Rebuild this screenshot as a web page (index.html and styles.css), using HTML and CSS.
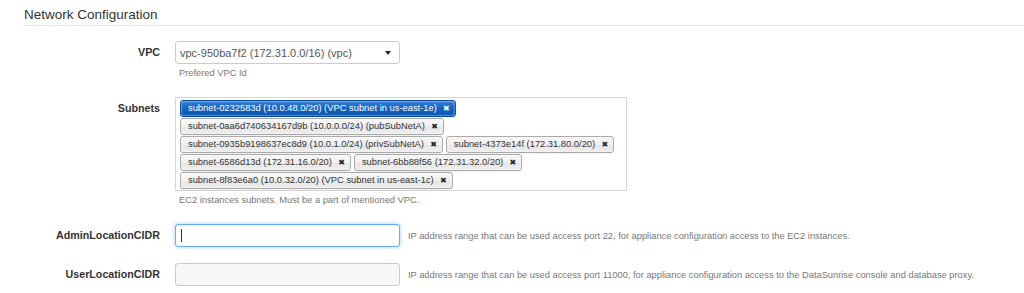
FILE: index.html
```html
<!DOCTYPE html>
<html lang="en">
<head>
  <meta charset="UTF-8" />
  <title>Network Configuration</title>
  <link rel="stylesheet" href="styles.css">
</head>
<body>
  <div class="page">
    <h3 class="section-title">Network Configuration</h3>
    <div class="form">
      <!-- VPC -->
      <div class="form-row row-vpc">
        <label class="row-label">VPC</label>
        <div class="row-field">
          <div class="select-box">
            <span class="select-value">vpc-950ba7f2 (172.31.0.0/16) (vpc)</span>
            <span class="select-arrow"></span>
          </div>
          <p class="help">Prefered VPC Id</p>
        </div>
      </div>
      <!-- Subnets -->
      <div class="form-row row-subnets">
        <label class="row-label">Subnets</label>
        <div class="row-field">
          <ul class="tag-box">
            <li class="tag active">subnet-0232583d (10.0.48.0/20) (VPC subnet in us-east-1e)<span class="tag-close">&#10006;</span></li>
            <li class="tag">subnet-0aa6d740634167d9b (10.0.0.0/24) (pubSubNetA)<span class="tag-close">&#10006;</span></li>
            <li class="tag">subnet-0935b9198637ec8d9 (10.0.1.0/24) (privSubNetA)<span class="tag-close">&#10006;</span></li>
            <li class="tag">subnet-4373e14f (172.31.80.0/20)<span class="tag-close">&#10006;</span></li>
            <li class="tag">subnet-6586d13d (172.31.16.0/20)<span class="tag-close">&#10006;</span></li>
            <li class="tag">subnet-6bb88f56 (172.31.32.0/20)<span class="tag-close">&#10006;</span></li>
            <li class="tag">subnet-8f83e6a0 (10.0.32.0/20) (VPC subnet in us-east-1c)<span class="tag-close">&#10006;</span></li>
          </ul>
          <p class="help">EC2 instances subnets. Must be a part of mentioned VPC.</p>
        </div>
      </div>
      <!-- Admin CIDR -->
      <div class="form-row row-admin">
        <label class="row-label">AdminLocationCIDR</label>
        <div class="row-field inline">
          <span class="input-wrap focused"><input class="text-input" type="text"></span>
          <p class="help side">IP address range that can be used access port 22, for appliance configuration access to the EC2 instances.</p>
        </div>
      </div>
      <!-- User CIDR -->
      <div class="form-row row-user">
        <label class="row-label">UserLocationCIDR</label>
        <div class="row-field inline">
          <span class="input-wrap"><input class="text-input muted" type="text"></span>
          <p class="help side">IP address range that can be used access port 11000, for appliance configuration access to the DataSunrise console and database proxy.</p>
        </div>
      </div>
    </div>
  </div>
</body>
</html>
```

FILE: styles.css
```css
html, body {
  box-sizing: border-box;
}
*, *::before, *::after {
  box-sizing: inherit;
}
body {
  margin: 0;
  background: #fff;
  font-family: 'Liberation Sans', Arial, sans-serif;
  color: #333;
}
.page {
  padding-left: 24px;
}
.section-title {
  margin: 0;
  padding-top: 5px;
  font-size: 13.5px;
  line-height: 20px;
  font-weight: normal;
  color: #333;
  border-bottom: 1px solid #e8e8e8;
}
.form {
  padding-top: 15px;
}
.form-row {
  display: flex;
  align-items: flex-start;
}
.row-vpc { margin-bottom: 18px; }
.row-subnets { margin-bottom: 18px; }
.row-admin { margin-bottom: 16px; }
.row-label {
  width: 136px;
  margin-right: 15px;
  text-align: right;
  font-size: 10.7px;
  font-weight: bold;
  line-height: 23px;
  color: #333;
  flex-shrink: 0;
}
.row-field {
  display: flex;
  flex-direction: column;
}
.row-field.inline {
  flex-direction: row;
  align-items: center;
}
/* Select */
.select-box {
  width: 225px;
  height: 23px;
  border: 1px solid #ccc;
  border-radius: 3px;
  display: flex;
  align-items: center;
  justify-content: space-between;
  padding: 0 8px 0 4px;
  font-size: 11px;
  color: #555;
  background: #fff;
}
.select-arrow {
  width: 0;
  height: 0;
  border-left: 3.5px solid transparent;
  border-right: 3.5px solid transparent;
  border-top: 4px solid #222;
}
.help {
  margin: 3px 0 0 4px;
  font-size: 9.3px;
  line-height: 12px;
  color: #777;
}
.help.side {
  margin: 0 0 0 8px;
  white-space: nowrap;
}
/* Tags */
.tag-box {
  list-style: none;
  margin: 0;
  width: 452px;
  height: 94px;
  border: 1px solid #d6d6d6;
  padding: 2px 4px 1px 4px;
  display: flex;
  flex-wrap: wrap;
  align-content: flex-start;
  column-gap: 3px;
  row-gap: 1px;
}
.tag {
  position: relative;
  height: 17px;
  line-height: 15px;
  padding: 0 18px 0 7px;
  font-size: 9.35px;
  color: #333;
  border: 1px solid #aaa;
  border-radius: 3px;
  background: linear-gradient(180deg, #f7f7f7 0%, #f0f0f0 50%, #e6e6e6 55%, #eee 100%);
  box-shadow: 0 0 2px #fff inset, 0 1px 0 rgba(0,0,0,0.05);
  white-space: nowrap;
}
.tag.active {
  color: #fff;
  border-color: #0d4f9e;
  background: linear-gradient(180deg, #3a80d6 0%, #1263c2 50%, #0b57b0 100%);
}
.tag-close {
  position: absolute;
  right: 5px;
  top: 0;
  font-family: 'DejaVu Sans', sans-serif;
  font-size: 8px;
  color: #222;
}
.tag.active .tag-close {
  color: #fff;
}
/* Inputs */
.input-wrap {
  position: relative;
  display: block;
}
.text-input {
  display: block;
  width: 225px;
  height: 23px;
  margin: 0;
  border: 1px solid #ccc;
  border-radius: 3px;
  background: #fff;
  font-family: 'Liberation Sans', Arial, sans-serif;
  font-size: 11px;
  outline: none;
}
.text-input.muted {
  background: #f7f7f7;
}
.input-wrap.focused .text-input {
  border-color: #66afe9;
  box-shadow: inset 0 1px 1px rgba(0,0,0,0.075), 0 0 4px rgba(102,175,233,0.6);
}
.input-wrap.focused::after {
  content: "";
  position: absolute;
  left: 6px;
  top: 5px;
  width: 1px;
  height: 13px;
  background: #333;
}
```
